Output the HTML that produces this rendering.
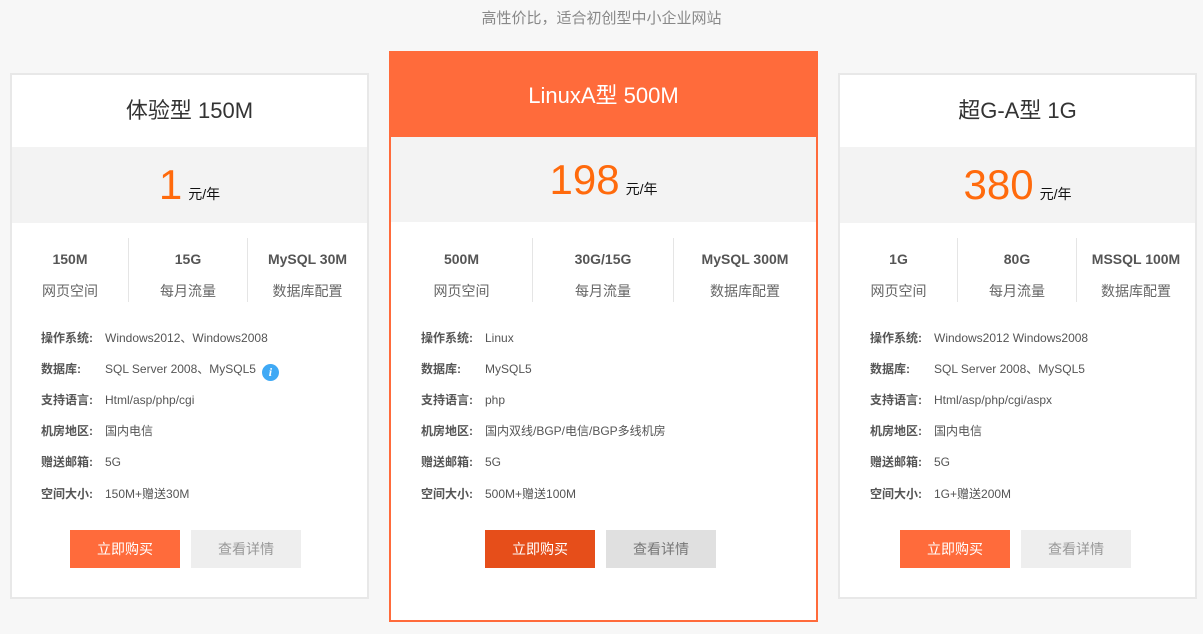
<!DOCTYPE html>
<html><head><meta charset="utf-8"><style>
*{margin:0;padding:0;box-sizing:border-box}
body{width:1203px;height:634px;background:#f7f7f7;position:relative;overflow:hidden;font-family:"Liberation Sans","Noto Sans CJK SC",sans-serif;color:#555}
.a{position:absolute}
.sub{left:0;width:1203px;top:9px;text-align:center;font-size:15px;color:#888;line-height:20px}
.card{background:#fff;border:2px solid #e8e8e8}
.card.hot{border-color:#ff6b3b}
.title{text-align:center;font-size:22px;color:#333;line-height:30px}
.band{background:#f3f3f3}
.price{text-align:center;white-space:nowrap}
.price b{font-weight:normal;font-size:42px;color:#ff6a0c;line-height:50px}
.price span{font-size:14px;color:#111;margin-left:6px}
.col{text-align:center}
.col .v{font-size:14px;font-weight:bold;color:#555;line-height:20px}
.col .l{font-size:14px;color:#666;line-height:20px;margin-top:12px}
.div{width:1px;background:#e5e5e5;height:64px;top:238px}
.row{font-size:12px;line-height:16px;white-space:nowrap;color:#555}
.row b{display:inline-block;width:64px;font-weight:bold;color:#555}
.btn{width:110px;height:38px;line-height:38px;text-align:center;font-size:14px}
.buy{background:#ff6b3b;color:#fff}
.buy.dk{background:#e64e1a}
.det{background:#eee;color:#999}
.det.dk{background:#e0e0e0;color:#777}
.info{display:inline-block;width:17px;height:17px;border-radius:50%;background:#3fa9f5;color:#fff;font:italic bold 12px "Liberation Serif",serif;text-align:center;line-height:17px;vertical-align:-3px;margin-left:6px}
</style></head><body>
<div class="a sub">高性价比，适合初创型中小企业网站</div>

<!-- card1 -->
<div class="a card" style="left:10px;top:73px;width:359px;height:526px"></div>
<div class="a title" style="left:12px;width:355px;top:96px">体验型 150M</div>
<div class="a band" style="left:12px;width:355px;top:147px;height:76px"></div>
<div class="a price" style="left:12px;width:355px;top:160px"><b>1</b><span>元/年</span></div>
<div class="a col" style="left:12px;width:116px;top:249px"><div class="v">150M</div><div class="l">网页空间</div></div>
<div class="a col" style="left:129px;width:118px;top:249px"><div class="v">15G</div><div class="l">每月流量</div></div>
<div class="a col" style="left:248px;width:119px;top:249px"><div class="v">MySQL 30M</div><div class="l">数据库配置</div></div>
<div class="a div" style="left:128px"></div><div class="a div" style="left:247px"></div>
<div class="a row" style="left:41px;top:330px"><b>操作系统:</b>Windows2012、Windows2008</div>
<div class="a row" style="left:41px;top:361px"><b>数据库:</b>SQL Server 2008、MySQL5<span class="info">i</span></div>
<div class="a row" style="left:41px;top:392px"><b>支持语言:</b>Html/asp/php/cgi</div>
<div class="a row" style="left:41px;top:423px"><b>机房地区:</b>国内电信</div>
<div class="a row" style="left:41px;top:454px"><b>赠送邮箱:</b>5G</div>
<div class="a row" style="left:41px;top:486px"><b>空间大小:</b>150M+赠送30M</div>
<div class="a btn buy" style="left:70px;top:530px">立即购买</div>
<div class="a btn det" style="left:191px;top:530px">查看详情</div>

<!-- card2 -->
<div class="a card hot" style="left:389px;top:51px;width:429px;height:571px"></div>
<div class="a" style="left:389px;top:51px;width:429px;height:86px;background:#ff6b3b"></div>
<div class="a title" style="left:391px;width:425px;top:81px;color:#fff">LinuxA型 500M</div>
<div class="a band" style="left:391px;width:425px;top:137px;height:85px"></div>
<div class="a price" style="left:391px;width:425px;top:155px"><b>198</b><span>元/年</span></div>
<div class="a col" style="left:391px;width:141px;top:249px"><div class="v">500M</div><div class="l">网页空间</div></div>
<div class="a col" style="left:533px;width:140px;top:249px"><div class="v">30G/15G</div><div class="l">每月流量</div></div>
<div class="a col" style="left:674px;width:142px;top:249px"><div class="v">MySQL 300M</div><div class="l">数据库配置</div></div>
<div class="a div" style="left:532px"></div><div class="a div" style="left:673px"></div>
<div class="a row" style="left:421px;top:330px"><b>操作系统:</b>Linux</div>
<div class="a row" style="left:421px;top:361px"><b>数据库:</b>MySQL5</div>
<div class="a row" style="left:421px;top:392px"><b>支持语言:</b>php</div>
<div class="a row" style="left:421px;top:423px"><b>机房地区:</b>国内双线/BGP/电信/BGP多线机房</div>
<div class="a row" style="left:421px;top:454px"><b>赠送邮箱:</b>5G</div>
<div class="a row" style="left:421px;top:486px"><b>空间大小:</b>500M+赠送100M</div>
<div class="a btn buy dk" style="left:485px;top:530px">立即购买</div>
<div class="a btn det dk" style="left:606px;top:530px">查看详情</div>

<!-- card3 -->
<div class="a card" style="left:838px;top:73px;width:359px;height:526px"></div>
<div class="a title" style="left:840px;width:355px;top:96px">超G-A型 1G</div>
<div class="a band" style="left:840px;width:355px;top:147px;height:76px"></div>
<div class="a price" style="left:840px;width:355px;top:160px"><b>380</b><span>元/年</span></div>
<div class="a col" style="left:840px;width:117px;top:249px"><div class="v">1G</div><div class="l">网页空间</div></div>
<div class="a col" style="left:958px;width:118px;top:249px"><div class="v">80G</div><div class="l">每月流量</div></div>
<div class="a col" style="left:1077px;width:118px;top:249px"><div class="v">MSSQL 100M</div><div class="l">数据库配置</div></div>
<div class="a div" style="left:957px"></div><div class="a div" style="left:1076px"></div>
<div class="a row" style="left:870px;top:330px"><b>操作系统:</b>Windows2012 Windows2008</div>
<div class="a row" style="left:870px;top:361px"><b>数据库:</b>SQL Server 2008、MySQL5</div>
<div class="a row" style="left:870px;top:392px"><b>支持语言:</b>Html/asp/php/cgi/aspx</div>
<div class="a row" style="left:870px;top:423px"><b>机房地区:</b>国内电信</div>
<div class="a row" style="left:870px;top:454px"><b>赠送邮箱:</b>5G</div>
<div class="a row" style="left:870px;top:486px"><b>空间大小:</b>1G+赠送200M</div>
<div class="a btn buy" style="left:900px;top:530px">立即购买</div>
<div class="a btn det" style="left:1021px;top:530px">查看详情</div>
</body></html>
